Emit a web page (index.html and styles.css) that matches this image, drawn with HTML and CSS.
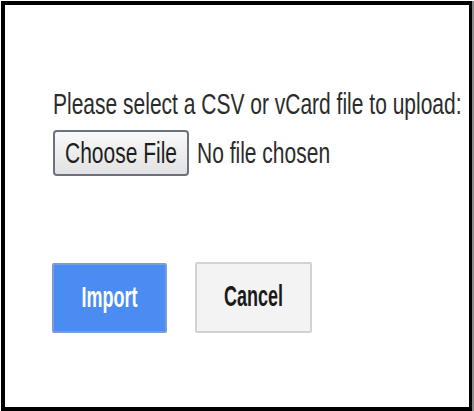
FILE: index.html
```html
<!DOCTYPE html>
<html lang="en">
<head>
  <meta charset="UTF-8" />
  <title>Import contacts</title>
  <link rel="stylesheet" href="styles.css">
</head>
<body>
  <div class="frame">
    <div class="prompt"><span class="stretch">Please select a CSV or vCard file to upload:</span></div>

    <div class="file-row">
      <button class="choose-btn"><span class="stretch-c">Choose File</span></button>
      <span class="file-name"><span class="stretch-c">No file chosen</span></span>
    </div>

    <div class="actions">
      <button class="btn btn-import"><span class="stretch-b">Import</span></button>
      <button class="btn btn-cancel"><span class="stretch-b">Cancel</span></button>
    </div>
  </div>
</body>
</html>
```

FILE: styles.css
```css
html, body {
  margin: 0;
  background: #fff;
}
body {
  width: 474px;
  height: 411px;
  overflow: hidden;
  font-family: "Liberation Sans", Arial, sans-serif;
  color: #2b2b2b;
}

.frame {
  box-sizing: border-box;
  width: 471px;
  height: 410px;
  margin: 1px 0 0 1px;
  border: 4px solid #000;
  border-right-width: 3px;
  box-shadow: 2px 0 0 #8c8c8c;
  padding: 83px 0 0 48px;
}

/* the source shot is stretched vertically, so text is too */
.stretch,
.stretch-c,
.stretch-b {
  display: inline-block;
}
.stretch {
  transform: scaleY(1.38);
  transform-origin: left top;
}
.stretch-c {
  transform: scaleY(1.42);
}
.stretch-b {
  transform: scaleY(1.6);
}

.prompt {
  font-size: 21px;
  line-height: 24px;
  white-space: nowrap;
}

.file-row {
  display: flex;
  align-items: center;
  gap: 8px;
  margin-top: 18px;
  font-size: 21px;
}
.choose-btn {
  box-sizing: border-box;
  width: 136px;
  height: 46px;
  padding: 0;
  border: 2px solid #6a7280;
  border-radius: 4px;
  background: linear-gradient(#f9f9f9, #ececec 55%, #e2e2e2);
  font-family: inherit;
  font-size: 21px;
  color: #1e1e1e;
  display: flex;
  align-items: center;
  justify-content: center;
}
.file-name {
  color: #2b2b2b;
}

.actions {
  display: flex;
  align-items: flex-start;
  gap: 28px;
  margin-top: 86px;
  margin-left: -1px;
}
.btn {
  box-sizing: border-box;
  padding: 0;
  font-family: inherit;
  font-size: 18px;
  font-weight: bold;
  display: flex;
  align-items: center;
  justify-content: center;
}
.btn-import {
  width: 115px;
  height: 70px;
  margin-top: 1px;
  background: #4a8cf2;
  border: 2px solid #7d9ccf;
  border-radius: 2px;
  color: #fff;
}
.btn-cancel {
  width: 117px;
  height: 71px;
  background: #f3f3f3;
  border: 2px solid #d2d2d2;
  border-radius: 2px;
  color: #1a1a1a;
}
```
